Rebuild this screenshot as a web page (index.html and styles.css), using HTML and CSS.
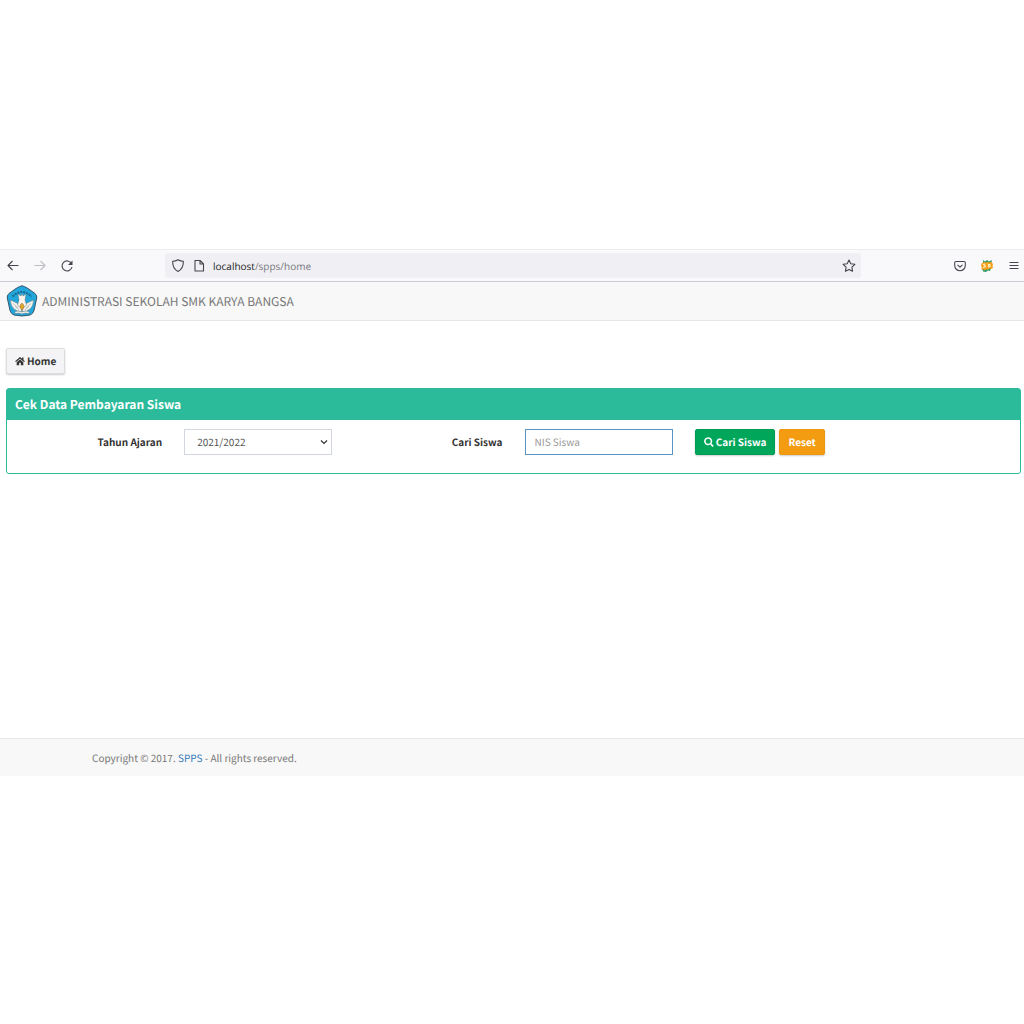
FILE: index.html
```
<!DOCTYPE html>
<html lang="id">
<head>
    <meta charset="UTF-8">
    <meta name="viewport" content="width=device-width, initial-scale=1.0">
    <title>Administrasi Sekolah</title>
    <link rel="stylesheet" href="styles.css">
</head>
<body>
    <div class="window">
        <div class="toolbar">
            <div class="nav-buttons">
                <button class="icon-btn" type="button" aria-label="Back">
                    <svg viewBox="0 0 14 14"><path d="M12.500 7.500H2M6.500 3L2 7.500 6.500 12"/></svg>
                </button>
                <button class="icon-btn" type="button" aria-label="Forward" disabled>
                    <svg viewBox="0 0 14 14"><path d="M1.500 7.500H12M7.500 3L12 7.500 7.500 12"/></svg>
                </button>
                <button class="icon-btn" type="button" aria-label="Reload">
                    <svg viewBox="0 0 14 14"><path d="M11.500 5.500A5 5 0 1 0 12 9"/><path class="solid" d="M12.500 2.500v4.500H8z"/></svg>
                </button>
            </div>
            <div class="urlbar">
                <svg class="icon" viewBox="0 0 14 14"><path d="M7 1.700C8.500 2.700 10.300 3.200 12.300 3.300 12.500 8 11 11.500 7 13.500 3 11.500 1.500 8 1.700 3.300 3.700 3.200 5.500 2.700 7 1.700z"/></svg>
                <svg class="icon" viewBox="0 0 14 14"><path d="M3 2.500h5l3.500 3.500v7H3zM8 2.500v3.500h3.500"/></svg>
                <span class="url">localhost<span class="path">/spps/home</span></span>
                <button class="icon-btn" type="button" aria-label="Bookmark">
                    <svg viewBox="0 0 14 14"><path d="M7 2l1.800 3.700 4.100.6-3 2.900.7 4.100L7 11.400l-3.600 1.900.7-4.100-3-2.900 4.100-.6z"/></svg>
                </button>
            </div>
            <div class="menu-buttons">
                <button class="icon-btn" type="button" aria-label="Pocket">
                    <svg viewBox="0 0 14 14"><path d="M3 3.500h8q1.300 0 1.300 1.300v2.700a5.300 5.300 0 0 1-10.600 0V4.800Q1.700 3.500 3 3.500zM4.500 6.800L7 9.200l2.500-2.400"/></svg>
                </button>
                <button class="icon-btn" type="button" aria-label="Extension">
                    <svg viewBox="0 0 14 14">
                        <path class="leaf" d="M3 2l2 1.500L7 2l2 1.500L12 2l-1 4H3zM2 10h9l-1 3-2-.5-2 1.500-3-.5z"/>
                        <path class="coin" d="M1.500 5.500L4 4l2 .7 1-1 2 .8 2.500-.5 1.500 2-.5 2 .5 2-2 1-2-.5-1 1.500-2-.5L4 12.500l-1-1.500-2 .5L2 9.500 1 8z"/>
                        <path class="gap" d="M5.500 6L3.500 6.500 5.500 8.700 3 9.500M8.500 6.500v2.500l1.500-.5v-2z"/>
                    </svg>
                </button>
                <button class="icon-btn" type="button" aria-label="Menu">
                    <svg viewBox="0 0 14 14"><path d="M2.500 4.500h9M2.500 7.500h9M2.500 10.500h9"/></svg>
                </button>
            </div>
        </div>

        <header class="site-header">
            <svg class="logo" viewBox="0 0 32 32">
                <path class="shield" d="M16 .8Q17.500.8 22 3.500L29 8.500Q31.300 10.500 30.700 13L28 25.500Q27 29 24 30 16 32 8 30 5 29 4 25.500L1.300 13Q.7 10.500 3 8.500L10 3.500Q14.500.8 16 .8z"/>
                <path class="motto" d="M6.500 11.500Q16 2.500 25.500 11.500"/>
                <path class="wing" d="M14.500 20Q9 17 4.500 15q0 5.500 3.500 9 3 2.500 8 2.500zM17.500 20q5.500-3 10-5 0 5.500-3.500 9-3 2.500-8 2.500z"/>
                <path class="feather" d="M7 18.500l5 4M9 21.500l4 3M25 18.500l-5 4M23 21.500l-4 3M13.500 13.500h5M14 16h4"/>
                <path class="wing" d="M12 9l3 2 1-2.500 1 2.500 3-2-1 6 1.500 5-4.500 4-4.500-4 1.500-5z"/>
                <path class="flame" d="M16 18q4 3.500 0 7-4-3.500 0-7z"/>
                <path class="wing" d="M9 26.500Q13 25.500 16 27q3-1.500 7-.5v2Q19 27.500 16 29q-3-1.500-7-.5z"/>
            </svg>
            <span class="brand">ADMINISTRASI SEKOLAH SMK KARYA BANGSA</span>
        </header>

        <main class="content">
            <a class="btn btn-default" href="#">
                <svg class="fa" viewBox="0 0 12 11"><path d="M6 .8L.1 5.800l1 1L6 2.800l4.900 4 1-1L10.200 4.300V1.200H8.500v1.700z"/><path d="M6 3.600L2 6.900V10.500h3V7.500h2v3h3V6.900z"/></svg>
                Home
            </a>

            <section class="panel">
                <h3 class="panel-heading">Cek Data Pembayaran Siswa</h3>
                <form class="panel-body">
                    <label for="tahun">Tahun Ajaran</label>
                    <div class="col">
                        <select id="tahun" class="form-control">
                            <option>2021/2022</option>
                        </select>
                    </div>
                    <label for="nis">Cari Siswa</label>
                    <div class="col">
                        <input id="nis" class="form-control focused" type="text" placeholder="NIS Siswa">
                    </div>
                    <div class="col actions">
                        <button class="btn btn-success" type="button">
                            <svg class="fa" viewBox="0 0 12 12"><path fill-rule="evenodd" d="M5 .2a4.800 4.800 0 1 0 2.400 8.900l2.500 2.500q.7.500 1.300-.1t.1-1.300L8.900 7.800A4.800 4.800 0 0 0 5 .2zM5 2a3 3 0 1 1 0 6 3 3 0 0 1 0-6z"/></svg>
                            Cari Siswa
                        </button>
                        <button class="btn btn-warning" type="reset">Reset</button>
                    </div>
                </form>
            </section>
        </main>

        <footer class="site-footer">Copyright © 2017. <a href="#">SPPS</a> - All rights reserved.</footer>
    </div>
</body>
</html>
```
FILE: styles.css
```
* {
    box-sizing: border-box;
}

body {
    margin: 0;
    min-height: 100vh;
    display: flex;
    align-items: center;
    background: #fff;
    color: #333;
    font-family: "Noto Sans CJK SC", "Noto Sans", sans-serif;
    font-size: 10px;
    line-height: 16px;
    text-rendering: geometricPrecision;
}

.window {
    width: 100%;
    display: flex;
    flex-direction: column;
}

/* browser toolbar */
.toolbar {
    display: flex;
    align-items: center;
    padding: 3px 3px 3px 6px;
    background: #f9f9fb;
    border-top: 1px solid #ededf0;
    border-bottom: 1px solid #cccdd2;
}

.nav-buttons {
    flex: none;
    display: flex;
    gap: 13px;
    width: 159px;
}

.icon-btn {
    display: block;
    padding: 0;
    border: 0;
    background: none;
    line-height: 0;
}

.icon-btn svg,
.icon {
    width: 14px;
    height: 14px;
    fill: none;
    stroke: #45454d;
    stroke-width: 1.1;
    stroke-linejoin: round;
}

.icon-btn:disabled svg {
    stroke: #bdbdc3;
}

.icon-btn .solid {
    fill: #45454d;
    stroke: none;
}

.icon-btn .leaf {
    fill: #2e9a68;
    stroke: none;
}

.icon-btn .coin {
    fill: #f5a01c;
    stroke: none;
}

.icon-btn .gap {
    stroke: #fff0c8;
}

.urlbar {
    flex: 1;
    display: flex;
    align-items: center;
    gap: 7px;
    height: 25px;
    padding: 0 5px 0 6px;
    background: #f0f0f4;
    border-radius: 3px;
}

.url {
    flex: 1;
    padding-top: 2px;
    color: #222;
    font-family: "Open Sans", sans-serif;
    font-size: 10px;
}

.path {
    color: #77777d;
}

.menu-buttons {
    flex: none;
    display: flex;
    justify-content: flex-end;
    gap: 13px;
    width: 160px;
}

/* site */
.site-header {
    display: flex;
    align-items: center;
    gap: 4px;
    height: 39px;
    padding: 0 6px;
    background: #f8f8f8;
    border-bottom: 1px solid #e7e7e7;
}

.logo {
    width: 32px;
    height: 32px;
}

.shield {
    fill: #22a7dc;
    stroke: #35566b;
}

.motto {
    fill: none;
    stroke: #17698f;
    stroke-width: 2;
    stroke-dasharray: 2 1;
}

.wing {
    fill: #f7f5ee;
    stroke: #66777c;
    stroke-width: 0.5;
}

.feather {
    stroke: #8ca0a5;
    stroke-width: 0.6;
}

.flame {
    fill: #e6a72e;
    stroke: #8b6224;
    stroke-width: 0.5;
}

.brand {
    padding-top: 2px;
    color: #777;
    font-size: 12px;
}

.content {
    min-height: 417px;
    padding: 27px 3px 0 6px;
}

.btn {
    display: inline-flex;
    align-items: center;
    gap: 2px;
    height: 26px;
    padding: 0 8px;
    border: 1px solid transparent;
    border-radius: 2px;
    box-shadow: 0 1px 2px rgba(0, 0, 0, 0.2);
    color: #fff;
    font-family: inherit;
    font-size: 10px;
    font-weight: bold;
    line-height: 16px;
    text-decoration: none;
    text-rendering: inherit;
    white-space: nowrap;
}

.btn-default {
    background: #f4f4f6;
    border-color: #ddd;
    color: #333;
}

.btn-success {
    background: #00a65a;
    border-color: #009e55;
}

.btn-warning {
    background: #f39c12;
    border-color: #ee9710;
}

.fa {
    width: 10px;
    height: 10px;
    fill: currentColor;
}

.panel {
    margin-top: 14px;
    border: 1px solid #2bbb9b;
    border-radius: 3px;
}

.panel-heading {
    margin: 0;
    padding: 5px 8px;
    background: #2bbb9b;
    color: #fff;
    font-size: 12px;
    line-height: 21px;
}

.panel-body {
    display: grid;
    grid-template-columns: repeat(6, 1fr);
    margin: 0 -4px;
    padding: 9px 0 18px;
}

.panel-body label {
    padding: 5px 11px;
    font-weight: bold;
    text-align: right;
}

.col {
    padding: 0 11px;
}

.form-control {
    display: block;
    width: 100%;
    height: 26px;
    padding: 0 9px;
    border: 1px solid #d2d6de;
    border-radius: 0;
    background: #fff;
    color: #555;
    font-family: inherit;
    font-size: 10px;
    text-rendering: inherit;
}

select.form-control {
    padding: 0 12px;
    appearance: none;
    background: #fff url("data:image/svg+xml,%3Csvg xmlns='http://www.w3.org/2000/svg' viewBox='0 0 8 6'%3E%3Cpath d='M1 1.500l3 3 3-3' fill='none' stroke='%23333' stroke-width='1.200'/%3E%3C/svg%3E") no-repeat right 3px center / 8px 6px;
}

.form-control::placeholder {
    color: #999;
}

.form-control.focused {
    border-color: #5b94c0;
}

.actions {
    display: flex;
    gap: 4px;
}

.site-footer {
    padding: 11px 92px 10px;
    background: #f8f8f8;
    border-top: 1px solid #e7e7e7;
    color: #777;
}

.site-footer a {
    color: #337ab7;
    text-decoration: none;
}
```
